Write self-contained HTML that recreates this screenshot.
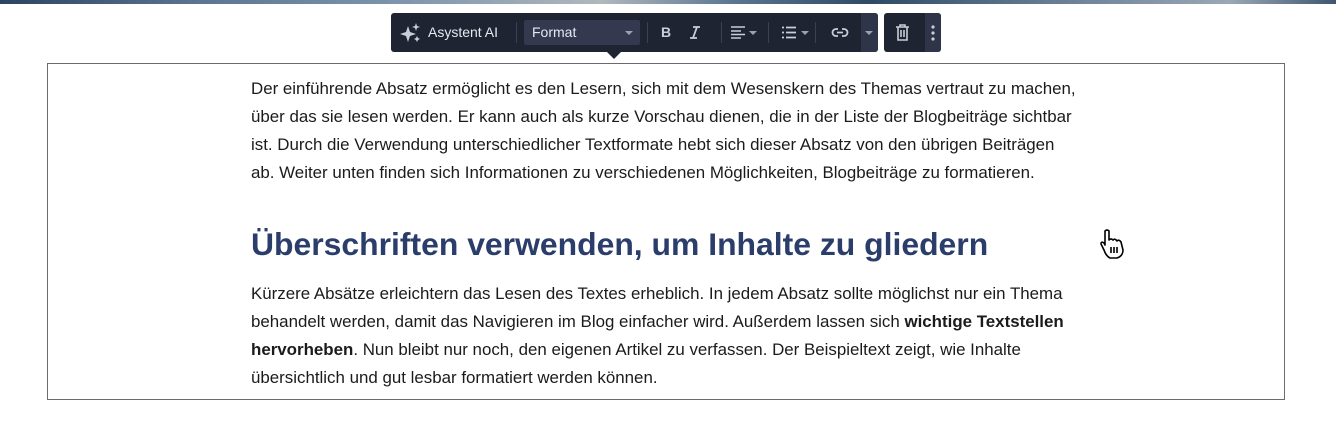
<!DOCTYPE html>
<html><head><meta charset="utf-8"><style>
html,body{margin:0;padding:0;width:1336px;height:447px;background:#fff;overflow:hidden;font-family:"Liberation Sans",sans-serif;}
.strip{position:absolute;left:0;top:0;width:1336px;height:4px;background:linear-gradient(90deg,#2c4460,#5d7590 15%,#7d95ad 30%,#b0b8bd 45%,#5a7591 55%,#2f4a66 65%,#6c8198 80%,#9aa8b4 92%,#3d5670);}
.tb{position:absolute;left:391px;top:13px;width:487px;height:39px;background:#1f2433;border-radius:3px;color:#e6e9ef;font-size:14px;}
.tb2{position:absolute;left:884px;top:13px;width:57px;height:39px;background:#1f2433;border-radius:3px;}
.tb2 .more{position:absolute;right:0;top:0;width:16px;height:39px;background:#2e3548;border-radius:0 3px 3px 0;}
.sep{position:absolute;top:9px;width:1px;height:21px;background:#3a4154;}
.fmt{position:absolute;left:133px;top:7px;width:116px;height:25px;background:#333a4f;border-radius:2px;}
.caretd{position:absolute;width:0;height:0;border-left:4px solid transparent;border-right:4px solid transparent;border-top:4px solid #9aa1b1;}
.ptr{position:absolute;left:607px;top:52px;width:0;height:0;border-left:7px solid transparent;border-right:7px solid transparent;border-top:7px solid #1f2433;}
.box{position:absolute;left:47px;top:63px;width:1236px;height:335px;border:1px solid #6b6b6b;}
.t{position:absolute;left:251px;font-size:16.9px;color:#1b1b1b;white-space:nowrap;line-height:28px;}
h2{position:absolute;left:251px;top:222px;margin:0;font-size:31.9px;color:#2b3d6b;font-weight:bold;white-space:nowrap;line-height:44px;}
</style></head><body>
<div class="strip"></div>
<div class="tb">
 <svg style="position:absolute;left:9px;top:10px" width="22" height="20" viewBox="0 0 22 20"><path d="M8 3 L10 9 L16 11 L10 13 L8 19 L6 13 L0 11 L6 9Z" fill="#c9ced8"/><path d="M16 0 L17 3 L20 4 L17 5 L16 8 L15 5 L12 4 L15 3Z" fill="#c9ced8"/><path d="M17 13 L18 15 L20 16 L18 17 L17 19 L16 17 L14 16 L16 15Z" fill="#c9ced8"/></svg>
 <span style="position:absolute;left:37px;top:11px">Asystent AI</span>
 <div class="sep" style="left:125px"></div>
 <div class="fmt"><span style="position:absolute;left:8px;top:4px">Format</span><div class="caretd" style="left:101px;top:11px"></div></div>
 <div class="sep" style="left:256px"></div>
 <span style="position:absolute;left:270px;top:11px;font-weight:bold;color:#c9ced8">B</span>
 <svg style="position:absolute;left:298px;top:13px" width="12" height="13" viewBox="0 0 12 13"><path d="M4 1H11M1 12H8M8 1L4 12" stroke="#c9ced8" stroke-width="1.8" fill="none"/></svg>
 <div class="sep" style="left:330px"></div>
 <svg style="position:absolute;left:340px;top:13px" width="14" height="13" viewBox="0 0 14 13"><path d="M0 1H14M0 5H10M0 8.5H14M0 12H10" stroke="#c9ced8" stroke-width="1.6"/></svg>
 <div class="caretd" style="left:358px;top:18px"></div>
 <div class="sep" style="left:377px"></div>
 <svg style="position:absolute;left:391px;top:13px" width="14" height="13" viewBox="0 0 14 13"><path d="M0 1.5H2M0 6.5H2M0 11.5H2M4 1.5H14M4 6.5H14M4 11.5H14" stroke="#c9ced8" stroke-width="1.8"/></svg>
 <div class="caretd" style="left:410px;top:18px"></div>
 <div class="sep" style="left:424px"></div>
 <svg style="position:absolute;left:440px;top:14px" width="18" height="11" viewBox="0 0 18 11"><path d="M7 2H5A3.5 3.5 0 0 0 5 9H7M11 2H13A3.5 3.5 0 0 1 13 9H11M6 5.5H12" stroke="#c9ced8" stroke-width="1.8" fill="none"/></svg>
 <div style="position:absolute;right:0;top:0;width:17px;height:39px;background:#2e3548;border-radius:0 3px 3px 0"><div class="caretd" style="left:4px;top:18px"></div></div>
</div>
<div class="tb2">
 <svg style="position:absolute;left:11px;top:11px" width="15" height="17" viewBox="0 0 15 17"><path d="M1 3H14M5 3V1H10V3M3 3V16H12V3M6 6V13M9 6V13" stroke="#c9ced8" stroke-width="1.6" fill="none"/></svg>
 <div class="more"><svg style="position:absolute;left:6px;top:12px" width="4" height="16"><circle cx="2" cy="2" r="1.6" fill="#c9ced8"/><circle cx="2" cy="8" r="1.6" fill="#c9ced8"/><circle cx="2" cy="14" r="1.6" fill="#c9ced8"/></svg></div>
</div>
<div class="ptr"></div>
<div class="box"></div>
<div class="t" style="top:75px">Der einführende Absatz ermöglicht es den Lesern, sich mit dem Wesenskern des Themas vertraut zu machen,<br>über das sie lesen werden. Er kann auch als kurze Vorschau dienen, die in der Liste der Blogbeiträge sichtbar<br>ist. Durch die Verwendung unterschiedlicher Textformate hebt sich dieser Absatz von den übrigen Beiträgen<br>ab. Weiter unten finden sich Informationen zu verschiedenen Möglichkeiten, Blogbeiträge zu formatieren.</div>
<h2>Überschriften verwenden, um Inhalte zu gliedern</h2>
<div class="t" style="top:280px">Kürzere Absätze erleichtern das Lesen des Textes erheblich. In jedem Absatz sollte möglichst nur ein Thema<br>behandelt werden, damit das Navigieren im Blog einfacher wird. Außerdem lassen sich <b>wichtige Textstellen</b><br><b>hervorheben</b>. Nun bleibt nur noch, den eigenen Artikel zu verfassen. Der Beispieltext zeigt, wie Inhalte<br>übersichtlich und gut lesbar formatiert werden können.</div>
<svg style="position:absolute;left:1099px;top:228px" width="30" height="32" viewBox="0 0 30 32"><path d="M6 3 Q8 1 10 3 L10 12 Q12 10 14 12 Q16 10 18 13 Q20 11 22 14 L24 22 Q24 28 18 30 L11 30 Q7 28 5 22 L2 16 Q2 13 5 15 L6 17Z" fill="#fff" stroke="#000" stroke-width="1.6" stroke-linejoin="round"/><path d="M12 19V25M15 19V25M18 19V25" stroke="#000" stroke-width="1.6"/></svg>
</body></html>
